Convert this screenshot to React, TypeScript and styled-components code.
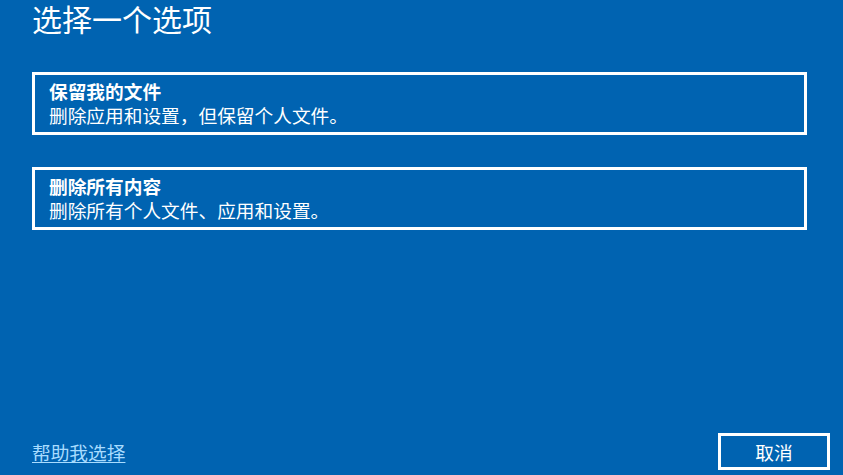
import styled, { createGlobalStyle } from "styled-components";

const GlobalStyle = createGlobalStyle`
  html, body {
    margin: 0;
    padding: 0;
    height: 100%;
    background: #0063b1;
  }
  #root {
    height: 100%;
  }
`;

const options = [
  { title: "保留我的文件", desc: "删除应用和设置，但保留个人文件。" },
  { title: "删除所有内容", desc: "删除所有个人文件、应用和设置。" },
];

export default function App() {
  return (
    <>
      <GlobalStyle />
      <Page>
        <Title>选择一个选项</Title>
        <OptionList>
          {options.map((opt) => (
            <OptionCard key={opt.title}>
              <OptionTitle>{opt.title}</OptionTitle>
              <OptionDesc>{opt.desc}</OptionDesc>
            </OptionCard>
          ))}
        </OptionList>
        <Footer>
          <HelpLink href="#">帮助我选择</HelpLink>
          <CancelBtn>取消</CancelBtn>
        </Footer>
      </Page>
    </>
  );
}

const Page = styled.div`
  height: 475px;
  box-sizing: border-box;
  display: flex;
  flex-direction: column;
  background: #0063b1;
  color: #fff;
  font-family: "Noto Sans CJK SC", "Liberation Sans", sans-serif;
  padding: 0 13px 5px 32px;
  overflow: hidden;
`;
const Title = styled.h1`
  margin: 0;
  font-size: 30px;
  font-weight: 400;
  line-height: 36px;
`;
const OptionList = styled.div`
  display: flex;
  flex-direction: column;
  gap: 32px;
  margin-top: 36px;
  width: 775px;
`;
const OptionCard = styled.button`
  display: flex;
  flex-direction: column;
  align-items: flex-start;
  box-sizing: border-box;
  height: 63px;
  padding: 4px 14px;
  border: 3px solid #fff;
  background: transparent;
  color: #fff;
  font-family: inherit;
  text-align: left;
  cursor: pointer;
`;
const OptionTitle = styled.span`
  font-size: 18.7px;
  font-weight: 700;
  line-height: 24px;
`;
const OptionDesc = styled.span`
  font-size: 18.7px;
  font-weight: 400;
  line-height: 24px;
`;
const Footer = styled.div`
  margin-top: auto;
  display: flex;
  align-items: center;
  justify-content: space-between;
`;
const HelpLink = styled.a`
  color: #a8dcff;
  font-size: 18.7px;
  line-height: 24px;
  text-decoration: underline;
  text-underline-offset: 2px;
`;
const CancelBtn = styled.button`
  box-sizing: border-box;
  width: 112px;
  height: 37px;
  border: 3px solid #fff;
  background: transparent;
  color: #fff;
  font-family: inherit;
  font-size: 18.7px;
  line-height: 24px;
  padding: 0;
  cursor: pointer;
`;
